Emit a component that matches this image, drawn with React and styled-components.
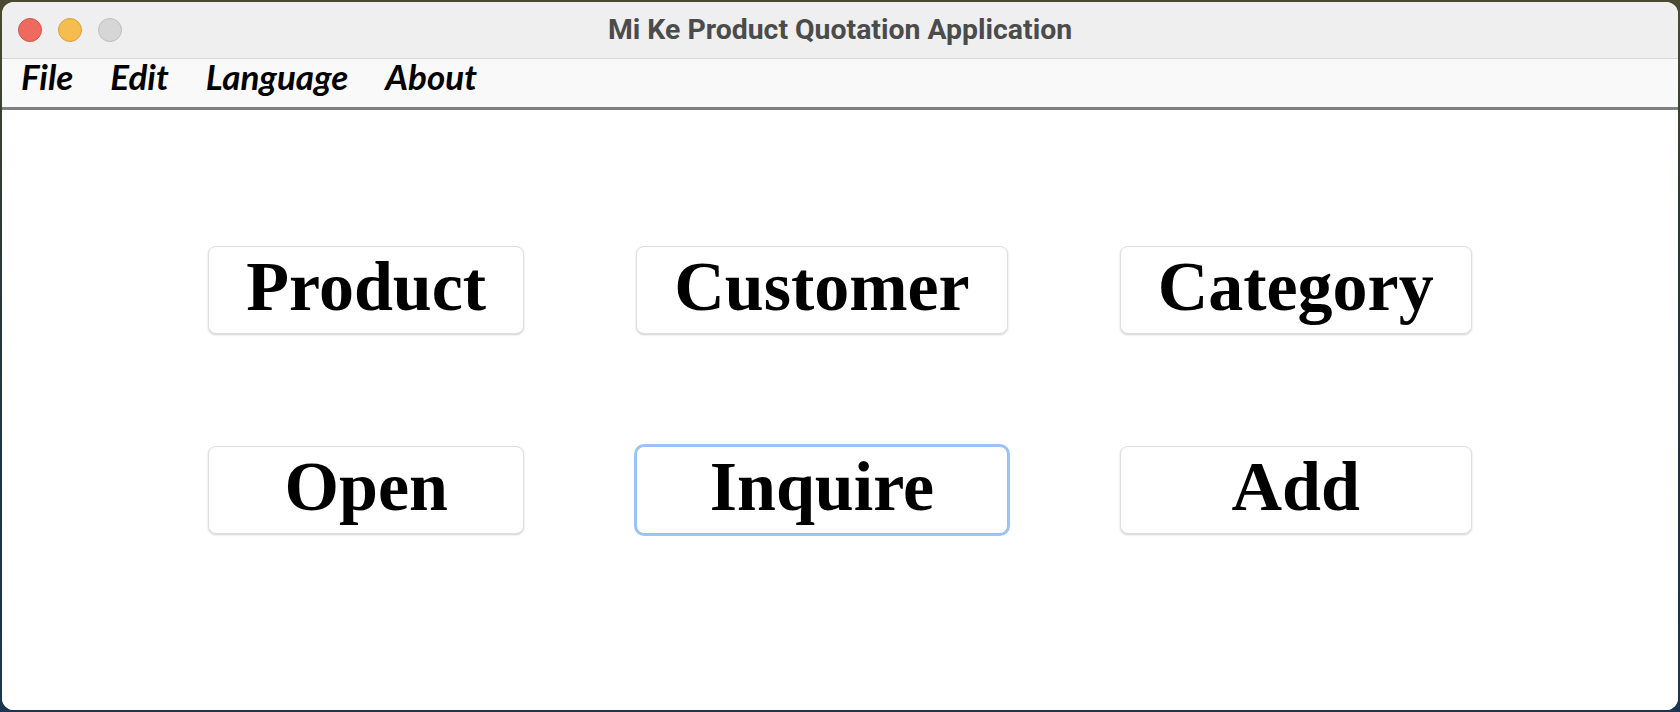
import React from "react";
import styled, { createGlobalStyle, css } from "styled-components";

/* base da página: fundo de "desktop" atrás da janela */
const GlobalStyle = createGlobalStyle`
  html, body { margin: 0; padding: 0; height: 712px; overflow: hidden; }
  body {
    background: linear-gradient(180deg, #4a4a30 0%, #2c3a34 30%, #1f3346 70%, #1d3550 100%);
    font-family: "Liberation Sans", Arial, sans-serif;
  }
`;

const Window = styled.div`
  margin: 2px;
  height: 708px;
  width: 1676px;
  display: flex;
  flex-direction: column;
  border-radius: 12px;
  overflow: hidden;
  background: #fff;
`;

const TitleBar = styled.div`
  position: relative;
  height: 56px;
  flex-shrink: 0;
  background: #efefef;
  border-bottom: 1px solid #d6d6d6;
  display: flex;
  align-items: center;
  justify-content: center;
`;

const Lights = styled.div`
  position: absolute;
  left: 16px; top: 16px;
  display: flex; gap: 16px;
`;

const lightColors = {
  close: ["#ee6a5f", "#d45448"],
  min: ["#f5bd4f", "#d8a13e"],
  zoom: ["#d6d6d6", "#bdbdbd"],
};

const Light = styled.span`
  width: 22px; height: 22px; border-radius: 50%;
  background: ${(p) => lightColors[p.$kind][0]};
  border: 1px solid ${(p) => lightColors[p.$kind][1]};
`;

const Title = styled.div`
  font-family: Roboto, "Liberation Sans", sans-serif;
  font-weight: 700;
  font-size: 28.4px;
  color: #4b4b4b;
  padding-bottom: 1px;
`;

const MenuBar = styled.div`
  height: 48px;
  flex-shrink: 0;
  background: #f9f9f9;
  border-bottom: 3px solid #808080;
  display: flex;
  align-items: center;
  gap: 37px;
  padding-left: 19px;
`;

const MenuItem = styled.span`
  font-family: Lato, "Noto Sans", sans-serif;
  font-style: italic;
  font-weight: 700;
  font-size: 35px;
  line-height: 1;
  color: #000;
  margin-top: -14px;
`;

const Content = styled.div`
  flex: 1;
  background: #fff;
  display: grid;
  grid-template-columns: auto auto auto;
  justify-content: center;
  align-content: start;
  column-gap: 112px;
  row-gap: 112px;
  padding-top: 136px;
`;

const Button = styled.button`
  font-family: "Liberation Serif", "Times New Roman", serif;
  font-weight: 700;
  font-size: 70px;
  line-height: 1;
  color: #000;
  background: #fff;
  border: 1px solid #dedede;
  border-radius: 8px;
  box-shadow: 0 1px 2px rgba(0, 0, 0, 0.18);
  padding: 5px 37px 11px;
  cursor: pointer;
  outline: none;

  ${(p) => p.$focused && css`
    border-color: #94bff3;
    box-shadow: 0 0 0 2px #9cc4f4;
  `}
`;

const menus = ["File", "Edit", "Language", "About"];
const actions = ["Product", "Customer", "Category", "Open", "Inquire", "Add"];

export default function App() {
  return (
    <>
      <GlobalStyle />
      <Window>
        <TitleBar>
          <Lights>
            <Light $kind="close" />
            <Light $kind="min" />
            <Light $kind="zoom" />
          </Lights>
          <Title>Mi Ke Product Quotation Application</Title>
        </TitleBar>
        <MenuBar>
          {menus.map((m) => <MenuItem key={m}>{m}</MenuItem>)}
        </MenuBar>
        <Content>
          {actions.map((a) => (
            <Button key={a} $focused={a === "Inquire"}>{a}</Button>
          ))}
        </Content>
      </Window>
    </>
  );
}
